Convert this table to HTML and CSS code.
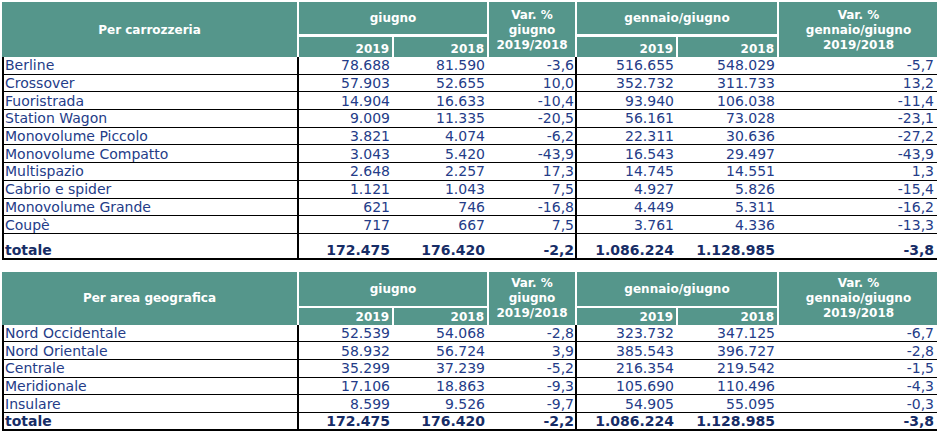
FILE: index.html
```html
<!DOCTYPE html>
<html lang="it">
<head>
<meta charset="utf-8">
<title>Immatricolazioni</title>
<link rel="stylesheet" href="styles.css">
</head>
<body>
<div class="page">
<table class="tbl t1">
<colgroup><col class="c-label"><col class="c-a"><col class="c-b"><col class="c-v"><col class="c-c"><col class="c-d"><col class="c-w"></colgroup>
<thead>
<tr class="h1">
<th rowspan="2" class="hl">Per carrozzeria</th>
<th colspan="2">giugno</th>
<th rowspan="2" class="hv">Var. %<br>giugno<br>2019/2018</th>
<th colspan="2">gennaio/giugno</th>
<th rowspan="2" class="hv last">Var. %<br>gennaio/giugno<br>2019/2018</th>
</tr>
<tr class="h2"><th class="r">2019</th><th class="r">2018</th><th class="r">2019</th><th class="r">2018</th></tr>
</thead>
<tbody>
<tr><td class="l">Berline</td><td>78.688</td><td>81.590</td><td class="v">-3,6</td><td>516.655</td><td>548.029</td><td class="w">-5,7</td></tr>
<tr><td class="l">Crossover</td><td>57.903</td><td>52.655</td><td class="v">10,0</td><td>352.732</td><td>311.733</td><td class="w">13,2</td></tr>
<tr><td class="l">Fuoristrada</td><td>14.904</td><td>16.633</td><td class="v">-10,4</td><td>93.940</td><td>106.038</td><td class="w">-11,4</td></tr>
<tr><td class="l">Station Wagon</td><td>9.009</td><td>11.335</td><td class="v">-20,5</td><td>56.161</td><td>73.028</td><td class="w">-23,1</td></tr>
<tr><td class="l">Monovolume Piccolo</td><td>3.821</td><td>4.074</td><td class="v">-6,2</td><td>22.311</td><td>30.636</td><td class="w">-27,2</td></tr>
<tr><td class="l">Monovolume Compatto</td><td>3.043</td><td>5.420</td><td class="v">-43,9</td><td>16.543</td><td>29.497</td><td class="w">-43,9</td></tr>
<tr><td class="l">Multispazio</td><td>2.648</td><td>2.257</td><td class="v">17,3</td><td>14.745</td><td>14.551</td><td class="w">1,3</td></tr>
<tr><td class="l">Cabrio e spider</td><td>1.121</td><td>1.043</td><td class="v">7,5</td><td>4.927</td><td>5.826</td><td class="w">-15,4</td></tr>
<tr><td class="l">Monovolume Grande</td><td>621</td><td>746</td><td class="v">-16,8</td><td>4.449</td><td>5.311</td><td class="w">-16,2</td></tr>
<tr><td class="l">Coupè</td><td>717</td><td>667</td><td class="v">7,5</td><td>3.761</td><td>4.336</td><td class="w">-13,3</td></tr>
<tr class="tot tall"><td class="l">totale</td><td>172.475</td><td>176.420</td><td class="v">-2,2</td><td>1.086.224</td><td>1.128.985</td><td class="w">-3,8</td></tr>
</tbody>
</table>

<table class="tbl t2">
<colgroup><col class="c-label"><col class="c-a"><col class="c-b"><col class="c-v"><col class="c-c"><col class="c-d"><col class="c-w"></colgroup>
<thead>
<tr class="h1">
<th rowspan="2" class="hl">Per area geografica</th>
<th colspan="2">giugno</th>
<th rowspan="2" class="hv">Var. %<br>giugno<br>2019/2018</th>
<th colspan="2">gennaio/giugno</th>
<th rowspan="2" class="hv last">Var. %<br>gennaio/giugno<br>2019/2018</th>
</tr>
<tr class="h2"><th class="r">2019</th><th class="r">2018</th><th class="r">2019</th><th class="r">2018</th></tr>
</thead>
<tbody>
<tr><td class="l">Nord Occidentale</td><td>52.539</td><td>54.068</td><td class="v">-2,8</td><td>323.732</td><td>347.125</td><td class="w">-6,7</td></tr>
<tr><td class="l">Nord Orientale</td><td>58.932</td><td>56.724</td><td class="v">3,9</td><td>385.543</td><td>396.727</td><td class="w">-2,8</td></tr>
<tr><td class="l">Centrale</td><td>35.299</td><td>37.239</td><td class="v">-5,2</td><td>216.354</td><td>219.542</td><td class="w">-1,5</td></tr>
<tr><td class="l">Meridionale</td><td>17.106</td><td>18.863</td><td class="v">-9,3</td><td>105.690</td><td>110.496</td><td class="w">-4,3</td></tr>
<tr><td class="l">Insulare</td><td>8.599</td><td>9.526</td><td class="v">-9,7</td><td>54.905</td><td>55.095</td><td class="w">-0,3</td></tr>
<tr class="tot"><td class="l">totale</td><td>172.475</td><td>176.420</td><td class="v">-2,2</td><td>1.086.224</td><td>1.128.985</td><td class="w">-3,8</td></tr>
</tbody>
</table>
</div>
</body>
</html>
```
FILE: styles.css
```css
html, body {
  margin: 0;
  padding: 0;
  background: #ffffff;
  overflow: hidden;
}
.page {
  padding: 2px 0 0 2px;
  width: 940px;
}
.tbl {
  border-collapse: separate;
  border-spacing: 0;
  table-layout: fixed;
  width: 936px;
  font-family: "DejaVu Sans", Verdana, sans-serif;
}
.t2 {
  margin-top: 12px;
}
.c-label { width: 297px; }
.c-a { width: 95px; }
.c-b { width: 95px; }
.c-v { width: 88px; }
.c-c { width: 101px; }
.c-d { width: 101px; }
.c-w { width: 159px; }

.tbl th {
  background: #55968b;
  color: #ffffff;
  font-weight: bold;
  font-size: 12px;
  line-height: 15px;
  padding: 1px 4px 0 4px;
  text-align: center;
  vertical-align: middle;
  border-right: 2px solid #ffffff;
}
.tbl th.last { border-right: 0; }
.tbl th.r {
  text-align: right;
  padding-right: 3px;
}
.t1 .h1 th[colspan] { border-bottom: 3px solid #ffffff; }
.t2 .h1 th[colspan] { border-bottom: 2px solid #ffffff; }
.t1 .h1 { height: 35px; }
.t1 .h2 { height: 20px; }
.t2 .h1 { height: 36px; }
.t2 .h2 { height: 17px; }
.tbl .h2 th { vertical-align: bottom; }

.tbl td {
  font-size: 14px;
  line-height: 15px;
  color: #243c88;
  text-align: right;
  padding: 1px 4px 0 0;
  vertical-align: middle;
  border-bottom: 1px solid #000000;
  white-space: nowrap;
}
.tbl tbody tr { height: 17.7px; }
.t2 tbody tr { height: 17.6px; }
.tbl td.l {
  text-align: left;
  padding: 1px 0 0 1px;
  border-left: 2px solid #000000;
  border-right: 2px solid #000000;
}
.tbl td.v {
  padding-right: 1px;
  border-right: 2px solid #000000;
}
.tbl td.w { padding-right: 4px; }

.tbl tr.tot td {
  font-weight: bold;
  color: #172d66;
  border-bottom: 2px solid #000000;
}
.tbl tr.tall { height: 26px; }
.tbl tr.tall td {
  vertical-align: bottom;
  padding-bottom: 0;
}
```
